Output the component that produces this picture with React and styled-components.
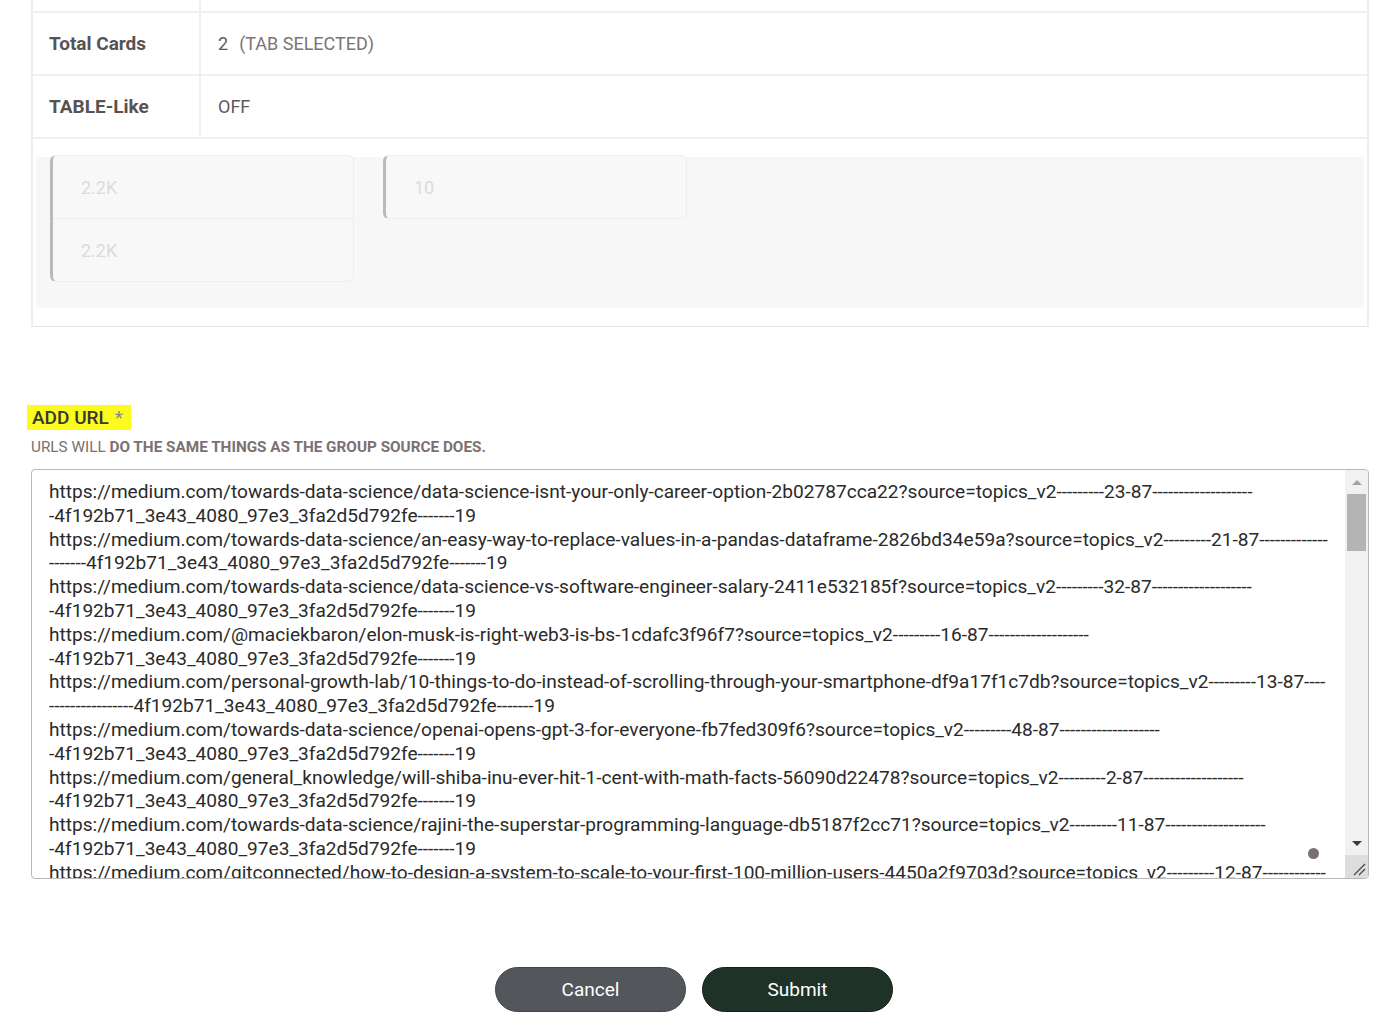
import styled, { createGlobalStyle } from "styled-components";

const GlobalStyle = createGlobalStyle`
  html, body {
    margin: 0;
    padding: 0;
    background: #ffffff;
  }
  body {
    font-family: Roboto, "Liberation Sans", Arial, sans-serif;
    color: #333;
  }
`;

const Page = styled.div`
  padding: 0 31px;
  box-sizing: border-box;
  width: 1400px;
`;

const Table = styled.div`
  border-left: 2px solid #eeeeee;
  border-right: 2px solid #eeeeee;
  border-bottom: 1px solid #e8e8e8;
`;

const Row = styled.div`
  display: grid;
  grid-template-columns: 168px 1fr;
  height: ${({ $height }) => $height}px;
  border-bottom: 2px solid #efefef;
`;

const Label = styled.div`
  display: flex;
  align-items: center;
  padding-left: 16px;
  border-right: 2px solid #efefef;
  font-size: 19px;
  font-weight: 700;
  color: #575253;
`;

const Value = styled.div`
  display: flex;
  align-items: center;
  padding-left: 17px;
  font-size: 18px;
  color: #5e5a5a;
`;

const Muted = styled.span`
  margin-left: 11px;
  color: #7d7475;
`;

const PreviewCell = styled.div`
  height: 187px;
  padding: 18px 3px 18px;
  box-sizing: border-box;
`;

const Preview = styled.div`
  height: 100%;
  background: #f7f7f7;
  padding: 0 14px;
  display: flex;
  align-items: flex-start;
  gap: 29px;
`;

const Card = styled.div`
  width: 304px;
  margin-top: -2px;
  box-sizing: border-box;
  border: 1px solid #ededed;
  border-left: 3px solid #bababa;
  border-radius: 6px;
  background: #f8f8f8;
`;

const CardRow = styled.div`
  height: 62px;
  display: flex;
  align-items: center;
  padding-left: 28px;
  font-size: 18px;
  color: #dcdcdc;
  & + & {
    border-top: 1px solid #ededed;
  }
`;

const FieldLabel = styled.div`
  margin-top: 78px;
  margin-left: -4px;
  display: inline-block;
  background: #fbfb1e;
  padding: 2px 8px 2px 5px;
  font-size: 19px;
  line-height: 21px;
  font-weight: 500;
  color: #363636;
`;

const Required = styled.span`
  margin-left: 6px;
  font-weight: 400;
  color: #8a8a8a;
`;

const Hint = styled.div`
  margin-top: 8px;
  font-size: 15.3px;
  line-height: 18px;
  color: #77716f;
  b {
    font-weight: 700;
    color: #7b7172;
  }
`;

const FieldWrap = styled.div`
  position: relative;
  margin-top: 13px;
`;

const UrlArea = styled.textarea`
  display: block;
  width: 100%;
  height: 410px;
  box-sizing: border-box;
  padding: 10px 39px 9px 17px;
  border: 1px solid #b8b8b8;
  border-radius: 4px;
  font-family: Roboto, "Liberation Sans", Arial, sans-serif;
  font-size: 19.1px;
  line-height: 23.8px;
  color: #2a2a2a;
  outline: none;
  resize: none;
  overflow: hidden;
`;

const Scrollbar = styled.div`
  position: absolute;
  top: 1px;
  right: 1px;
  bottom: 1px;
  width: 23px;
  display: flex;
  flex-direction: column;
  background: #f1f1f1;
  border-top-right-radius: 3px;
  border-bottom-right-radius: 3px;
  overflow: hidden;
`;

const ArrowButton = styled.div`
  height: 24px;
  flex: none;
  display: flex;
  align-items: center;
  justify-content: center;
`;

const Triangle = styled.div`
  width: 0;
  height: 0;
  border-left: 5px solid transparent;
  border-right: 5px solid transparent;
  ${({ $down }) =>
    $down ? "border-top: 5px solid #3c3c3c;" : "border-bottom: 5px solid #a3a3a3;"}
`;

const Track = styled.div`
  flex: 1;
  padding: 0 2px;
`;

const Thumb = styled.div`
  height: 57px;
  background: #b4b4b4;
`;

const Corner = styled.div`
  height: 23px;
  flex: none;
  background: #dddddd;
  display: flex;
`;

const Pointer = styled.div`
  position: absolute;
  left: 1277px;
  top: 379px;
  width: 11px;
  height: 11px;
  border-radius: 50%;
  background: #7b7070;
  pointer-events: none;
`;

const Actions = styled.div`
  display: flex;
  justify-content: center;
  gap: 16px;
  margin-top: 88px;
  padding-right: 12px;
`;

const Button = styled.button`
  width: 191px;
  height: 45px;
  border-radius: 23px;
  border: 1px solid ${({ $primary }) => ($primary ? "#13211a" : "#404348")};
  background: ${({ $primary }) => ($primary ? "#1e3228" : "#53565b")};
  color: #ffffff;
  font-family: Roboto, "Liberation Sans", Arial, sans-serif;
  font-size: 19px;
  cursor: pointer;
`;

const tail = "--------------------4f192b71_3e43_4080_97e3_3fa2d5d792fe-------19";

const urls = [
  ["towards-data-science/data-science-isnt-your-only-career-option-2b02787cca22", "23"],
  ["towards-data-science/an-easy-way-to-replace-values-in-a-pandas-dataframe-2826bd34e59a", "21"],
  ["towards-data-science/data-science-vs-software-engineer-salary-2411e532185f", "32"],
  ["@maciekbaron/elon-musk-is-right-web3-is-bs-1cdafc3f96f7", "16"],
  ["personal-growth-lab/10-things-to-do-instead-of-scrolling-through-your-smartphone-df9a17f1c7db", "13"],
  ["towards-data-science/openai-opens-gpt-3-for-everyone-fb7fed309f6", "48"],
  ["general_knowledge/will-shiba-inu-ever-hit-1-cent-with-math-facts-56090d22478", "2"],
  ["towards-data-science/rajini-the-superstar-programming-language-db5187f2cc71", "11"],
  ["gitconnected/how-to-design-a-system-to-scale-to-your-first-100-million-users-4450a2f9703d", "12"],
  ["towards-data-science/how-i-built-a-data-science-portfolio-8f2c1d0e6b7a", "9"],
]
  .map(([path, n]) => `https://medium.com/${path}?source=topics_v2---------${n}-87${tail}`)
  .join("\n");

function ResizeGrip() {
  return (
    <svg width="23" height="23" viewBox="0 0 23 23">
      <path d="M9 20 L20 9 M14 20 L20 14" stroke="#4a4a4a" strokeWidth="1.3" fill="none" />
    </svg>
  );
}

export default function App() {
  return (
    <Page>
      <GlobalStyle />
      <Table>
        <Row $height={11}>
          <Label />
          <Value />
        </Row>
        <Row $height={61}>
          <Label>Total Cards</Label>
          <Value>
            2<Muted>(TAB SELECTED)</Muted>
          </Value>
        </Row>
        <Row $height={61}>
          <Label>TABLE-Like</Label>
          <Value>OFF</Value>
        </Row>
        <PreviewCell>
          <Preview>
            <Card>
              <CardRow>2.2K</CardRow>
              <CardRow>2.2K</CardRow>
            </Card>
            <Card>
              <CardRow>10</CardRow>
            </Card>
          </Preview>
        </PreviewCell>
      </Table>

      <FieldLabel>
        ADD URL<Required>*</Required>
      </FieldLabel>
      <Hint>
        URLS WILL <b>DO THE SAME THINGS AS THE GROUP SOURCE DOES.</b>
      </Hint>
      <FieldWrap>
        <UrlArea defaultValue={urls} spellCheck={false} />
        <Scrollbar>
          <ArrowButton>
            <Triangle />
          </ArrowButton>
          <Track>
            <Thumb />
          </Track>
          <ArrowButton>
            <Triangle $down />
          </ArrowButton>
          <Corner>
            <ResizeGrip />
          </Corner>
        </Scrollbar>
        <Pointer />
      </FieldWrap>

      <Actions>
        <Button>Cancel</Button>
        <Button $primary>Submit</Button>
      </Actions>
    </Page>
  );
}
